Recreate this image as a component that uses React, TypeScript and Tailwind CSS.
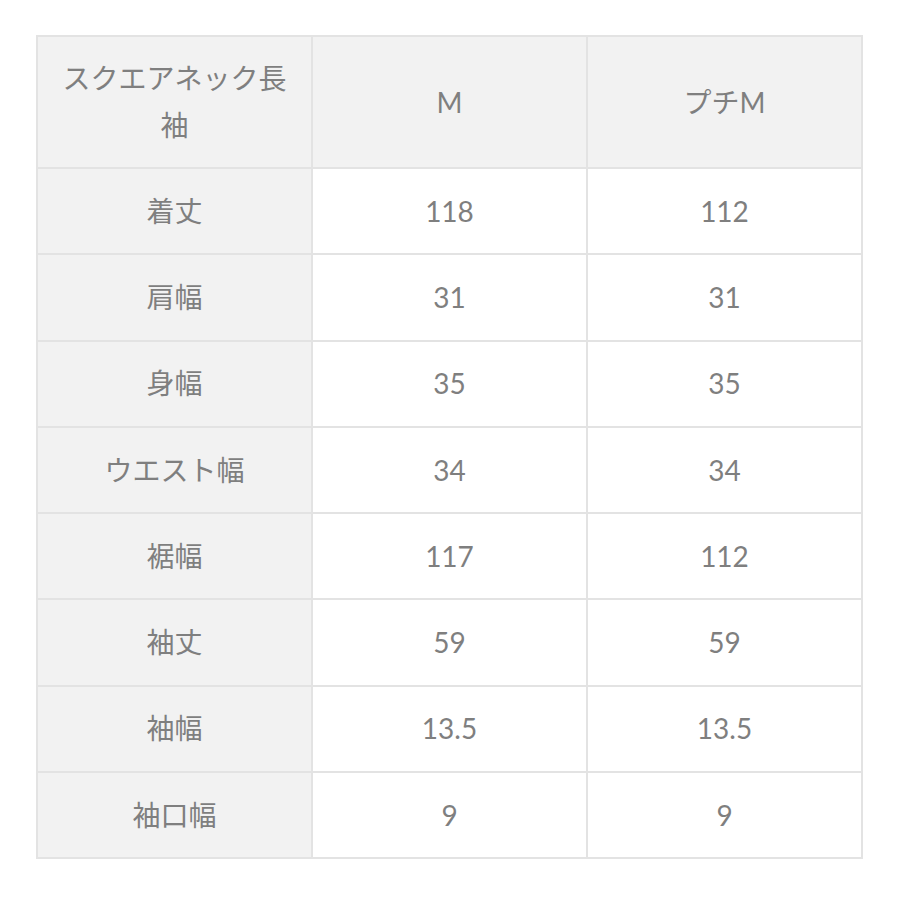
import React from 'react';

const rows: [string, string, string][] = [
  ['着丈', '118', '112'],
  ['肩幅', '31', '31'],
  ['身幅', '35', '35'],
  ['ウエスト幅', '34', '34'],
  ['裾幅', '117', '112'],
  ['袖丈', '59', '59'],
  ['袖幅', '13.5', '13.5'],
  ['袖口幅', '9', '9'],
];

const cell = 'border-2 border-[#e3e3e3] px-[20px] text-center align-middle font-normal';

const App: React.FC = () => {
  return (
    <div
      className="w-[900px] h-[900px] bg-white pt-[35px] pl-[36px]"
      style={{ fontFamily: 'Lato, "Noto Sans CJK JP", sans-serif' }}
    >
      <table className="w-[827px] table-fixed border-collapse text-[28px] leading-[47px] text-[#7f7f7f]">
        <thead>
          <tr className="bg-[#f2f2f2]">
            <th className={`${cell} py-[18px]`}>スクエアネック長袖</th>
            <th className={`${cell} py-[18px]`}>M</th>
            <th className={`${cell} py-[18px]`}>プチM</th>
          </tr>
        </thead>
        <tbody>
          {rows.map(([label, m, pm]) => (
            <tr key={label} className="h-[86.3px]">
              <td className={`${cell} bg-[#f2f2f2]`}>{label}</td>
              <td className={`${cell} bg-white`}>{m}</td>
              <td className={`${cell} bg-white`}>{pm}</td>
            </tr>
          ))}
        </tbody>
      </table>
    </div>
  );
};

export default App;
